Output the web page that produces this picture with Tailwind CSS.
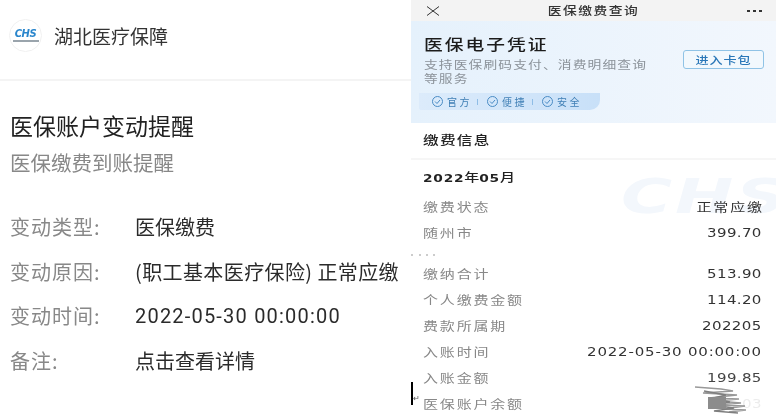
<!DOCTYPE html>
<html lang="zh">
<head>
<meta charset="utf-8">
<script src="https://cdn.jsdelivr.net/npm/@tailwindcss/browser@4"></script>
</head>
<body class="bg-white">
<div class="flex w-[780px] h-[416px] overflow-hidden bg-white font-['Noto_Sans_CJK_SC','Noto_Sans',sans-serif] antialiased">
  <!-- left -->
  <div class="w-[411px] shrink-0 flex flex-col text-[#2b2b2b] blur-[0.5px]">
    <div class="h-[81px] shrink-0 border-b-2 border-[#f4f4f4] flex items-center pl-[9px] pb-[9px]">
      <div class="w-[33px] h-[33px] rounded-full border border-[#f0f0f0] flex flex-col items-center justify-center">
        <span class="font-['DejaVu_Sans'] italic font-bold text-[10px] leading-[10px] tracking-[-0.5px] text-[#2a86cc]">CHS</span>
        <span class="block w-[26px] h-[2px] mt-[1px] bg-[#9aa4ac]"></span>
      </div>
      <span class="ml-[12px] text-[19px] leading-none text-[#333]">湖北医疗保障</span>
    </div>
    <div class="pl-[10px] pt-[29px] text-[23px] leading-[30px] text-[#222]">医保账户变动提醒</div>
    <div class="pl-[10px] pt-[7px] text-[20.5px] leading-[30px] text-[#888]">医保缴费到账提醒</div>
    <div class="pl-[10px] pt-[28px] flex flex-col">
      <div class="flex h-[44.5px] items-center text-[20px]"><span class="w-[125px] text-[#888] tracking-[1px]">变动类型:</span><span class="text-[#2b2b2b]">医保缴费</span></div>
      <div class="flex h-[44.5px] items-center text-[20px]"><span class="w-[125px] text-[#888] tracking-[1px]">变动原因:</span><span class="text-[#2b2b2b] whitespace-nowrap tracking-[0.4px]">(职工基本医疗保险) 正常应缴</span></div>
      <div class="flex h-[44.5px] items-center text-[20px]"><span class="w-[125px] text-[#888] tracking-[1px]">变动时间:</span><span class="text-[#2b2b2b] font-['Roboto'] tracking-[1.2px]">2022-05-30 00:00:00</span></div>
      <div class="flex h-[44.5px] items-center text-[20px]"><span class="w-[125px] text-[#888] tracking-[1px]">备注:</span><span class="text-[#2b2b2b]">点击查看详情</span></div>
    </div>
  </div>
  <!-- right -->
  <div class="relative w-[365px] shrink-0 flex flex-col overflow-hidden blur-[0.4px]">
    <div class="relative h-[21px] shrink-0 bg-[#f3f3f3] flex items-center justify-between pl-[15px] pr-[14px]">
      <svg width="14" height="10" viewBox="0 0 14 10" fill="none" stroke="#333" stroke-width="1"><path d="M1 0.5l12 9M13 0.5L1 9.5"/></svg>
      <span class="inline-block scale-x-[1.25] text-[11px] tracking-[1.2px] text-[#333] font-medium">医保缴费查询</span>
      <span class="flex gap-[3px]"><i class="w-[3px] h-[2px] bg-[#333]"></i><i class="w-[3px] h-[2px] bg-[#333]"></i><i class="w-[3px] h-[2px] bg-[#333]"></i></span>
    </div>
    <div class="h-[102px] shrink-0 flex justify-between bg-gradient-to-r from-[#e5f1fc] to-[#f2f7fd] pl-[13px] pr-[12px]">
      <div class="flex flex-col items-start">
        <div class="mt-[13px] origin-left scale-x-[1.25] text-[15px] leading-[20px] tracking-[1.6px] font-medium text-[#1c1c1c] whitespace-nowrap">医保电子凭证</div>
        <div class="mt-[4px] w-[185px] origin-left scale-x-[1.25] text-[11px] leading-[13.5px] tracking-[0.9px] text-[#8b9299]">支持医保刷码支付、消费明细查询等服务</div>
        <div class="mt-[8px] -ml-[5px] h-[17px] w-[181px] rounded-bl-[2px] rounded-br-[10px] bg-gradient-to-r from-[#dcebfb] to-[#c8e0f8] flex items-center pl-[12px] text-[10px] tracking-[2.5px] text-[#3f7fb5]">
          <svg width="13" height="13" viewBox="0 0 13 13" fill="none" stroke="#4a8cc5" stroke-width="1"><circle cx="6.5" cy="6.5" r="5"/><path d="M4 6.5l2 2 3-3.5"/></svg>
          <span class="ml-[3px]">官方</span><i class="ml-[5px] mr-[8px] w-px h-[6px] bg-[#8fbde6]"></i>
          <svg width="13" height="13" viewBox="0 0 13 13" fill="none" stroke="#4a8cc5" stroke-width="1"><circle cx="6.5" cy="6.5" r="5"/><path d="M4 6.5l2 2 3-3.5"/></svg>
          <span class="ml-[3px]">便捷</span><i class="ml-[5px] mr-[8px] w-px h-[6px] bg-[#8fbde6]"></i>
          <svg width="13" height="13" viewBox="0 0 13 13" fill="none" stroke="#4a8cc5" stroke-width="1"><circle cx="6.5" cy="6.5" r="5"/><path d="M4 6.5l2 2 3-3.5"/></svg>
          <span class="ml-[3px]">安全</span>
        </div>
      </div>
      <div class="mt-[29px] w-[81px] h-[19px] rounded-[3px] border border-[#90c3e6] bg-[#f2f8fd] flex items-center justify-center text-[10.5px] font-medium text-[#2a77b8]"><span class="inline-block scale-x-[1.25] tracking-[0.7px]">进入卡包</span></div>
    </div>
    <div class="h-[37px] shrink-0 border-b-2 border-[#f6f6f6] pl-[12px] flex items-center text-[12.5px] font-medium text-[#222]"><span class="inline-block origin-left scale-x-[1.25] tracking-[1px]">缴费信息</span></div>
    <div class="h-[36px] shrink-0 pl-[12px] flex items-center text-[12px] font-medium text-[#222]"><span class="inline-block origin-left scale-x-[1.25] whitespace-nowrap"><span class="font-['DejaVu_Sans'] font-bold text-[11px] tracking-[0.6px]">2022</span>年<span class="font-['DejaVu_Sans'] font-bold text-[11px] tracking-[0.6px]">05</span>月</span></div>
    <div class="flex flex-col pl-[12px] pr-[14px] -mt-[2px] text-[12px] tracking-[1.45px] text-[#888] [&>div]:h-[26px] [&>div]:flex [&>div]:items-center [&>div]:justify-between [&>div>span]:inline-block [&>div>span]:scale-x-[1.25] [&>div>span:first-child]:origin-left [&>div>span:last-child]:origin-right">
      <div><span>缴费状态</span><span class="text-[#333] -mr-[2px]">正常应缴</span></div>
      <div class="!h-[41px] !items-start pt-[4px]"><span>随州市</span><span class="font-['DejaVu_Sans'] tracking-[0.3px] text-[#333]">399.70</span></div>
      <div><span>缴纳合计</span><span class="font-['DejaVu_Sans'] tracking-[0.3px] text-[#333]">513.90</span></div>
      <div><span>个人缴费金额</span><span class="font-['DejaVu_Sans'] tracking-[0.3px] text-[#333]">114.20</span></div>
      <div><span>费款所属期</span><span class="font-['DejaVu_Sans'] tracking-[0.3px] text-[#333]">202205</span></div>
      <div><span>入账时间</span><span class="font-['DejaVu_Sans'] tracking-[0.65px] text-[#333]">2022-05-30 00:00:00</span></div>
      <div><span>入账金额</span><span class="font-['DejaVu_Sans'] tracking-[0.3px] text-[#444]">199.85</span></div>
      <div><span>医保账户余额</span><span class="font-['DejaVu_Sans'] tracking-[0.3px] text-[#ececec]">03</span></div>
    </div>
    <!-- overlays -->
    <div class="absolute left-[210px] top-[170px] origin-left scale-x-[1.45] font-['DejaVu_Sans'] italic font-bold text-[48px] leading-[52px] tracking-[2px] text-[#f3f7fc] -z-10">CHS</div>
    <div class="absolute left-0 top-[382px] w-[2px] h-[23px] bg-black"></div>
    <span class="absolute left-[2px] top-[393px] text-[8px] leading-[10px] text-[#555]">↵</span>
    <svg class="absolute left-[283px] top-[386px] blur-[0.7px]" width="52" height="30" viewBox="0 0 52 30" fill="none" stroke="#777" stroke-width="1.5" opacity="0.75">
      <path d="M1 1l26 2 12 2-30 2 34 2-28 3 30 1-22 2 24 2-24 2 28 1-22 3 24 1-18 2"/>
      <path d="M10 5l22 4-16 4 20 3-18 3 22 3-20 3 24 2" stroke="#555"/>
      <path d="M14 11h18v12H14z" fill="#666" stroke="none"/>
    </svg>
    <svg class="absolute left-0 top-[254px]" width="26" height="2" viewBox="0 0 26 2" fill="#ccc"><path d="M0 0h2v2H0zM8 0h2v2H8zM15 0h2v2h-2zM22 0h2v2h-2z"/></svg>
  </div>
</div>
</body>
</html>
